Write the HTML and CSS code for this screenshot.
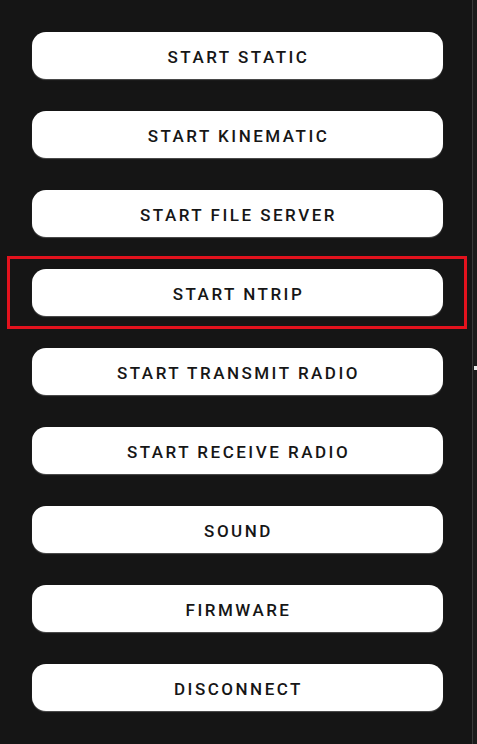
FILE: index.html
```html
<!DOCTYPE html>
<html lang="en">
<head>
    <meta charset="UTF-8">
    <meta name="viewport" content="width=device-width, initial-scale=1.0">
    <title>Device Menu</title>
    <link rel="stylesheet" href="styles.css">
</head>
<body>
    <div class="screen">
        <div class="menu">
            <button class="menu-btn">Start Static</button>
            <button class="menu-btn">Start Kinematic</button>
            <button class="menu-btn">Start File Server</button>
            <div class="highlight">
                <button class="menu-btn">Start NTRIP</button>
            </div>
            <button class="menu-btn">Start Transmit Radio</button>
            <button class="menu-btn">Start Receive Radio</button>
            <button class="menu-btn">Sound</button>
            <button class="menu-btn">Firmware</button>
            <button class="menu-btn">Disconnect</button>
        </div>
        <div class="edge">
            <span class="edge-mark"></span>
        </div>
    </div>
</body>
</html>
```

FILE: styles.css
```css
html, body {
    margin: 0;
    padding: 0;
    height: 100%;
}
body {
    background-color: #151515;
    font-family: Roboto, "Noto Sans", sans-serif;
}
.screen {
    display: flex;
    height: 744px;
}
.menu {
    width: 411px;
    padding: 32px 29px 0 32px;
    display: flex;
    flex-direction: column;
    gap: 32px;
}
.menu-btn {
    display: block;
    width: 411px;
    height: 47px;
    border: none;
    border-radius: 14px;
    background-color: #fff;
    color: #161616;
    font-family: Roboto, "Noto Sans", sans-serif;
    font-size: 17px;
    font-weight: 500;
    letter-spacing: 2.5px;
    text-transform: uppercase;
    box-shadow: 0 1px 1px rgba(255,255,255,0.25);
    padding: 2px 0 0 2px;
    cursor: pointer;
}
.highlight {
    border: 3px solid #e3121d;
    padding: 10px 21px 10px 22px;
    margin: -13px -24px -13px -25px;
}
.edge {
    flex: 1;
    border-left: 1px solid #3a3a3a;
    background-color: #1b1b1b;
    position: relative;
}
.edge-mark {
    position: absolute;
    top: 366px;
    left: 1px;
    width: 3px;
    height: 4px;
    background-color: #e8e8e8;
}
```
